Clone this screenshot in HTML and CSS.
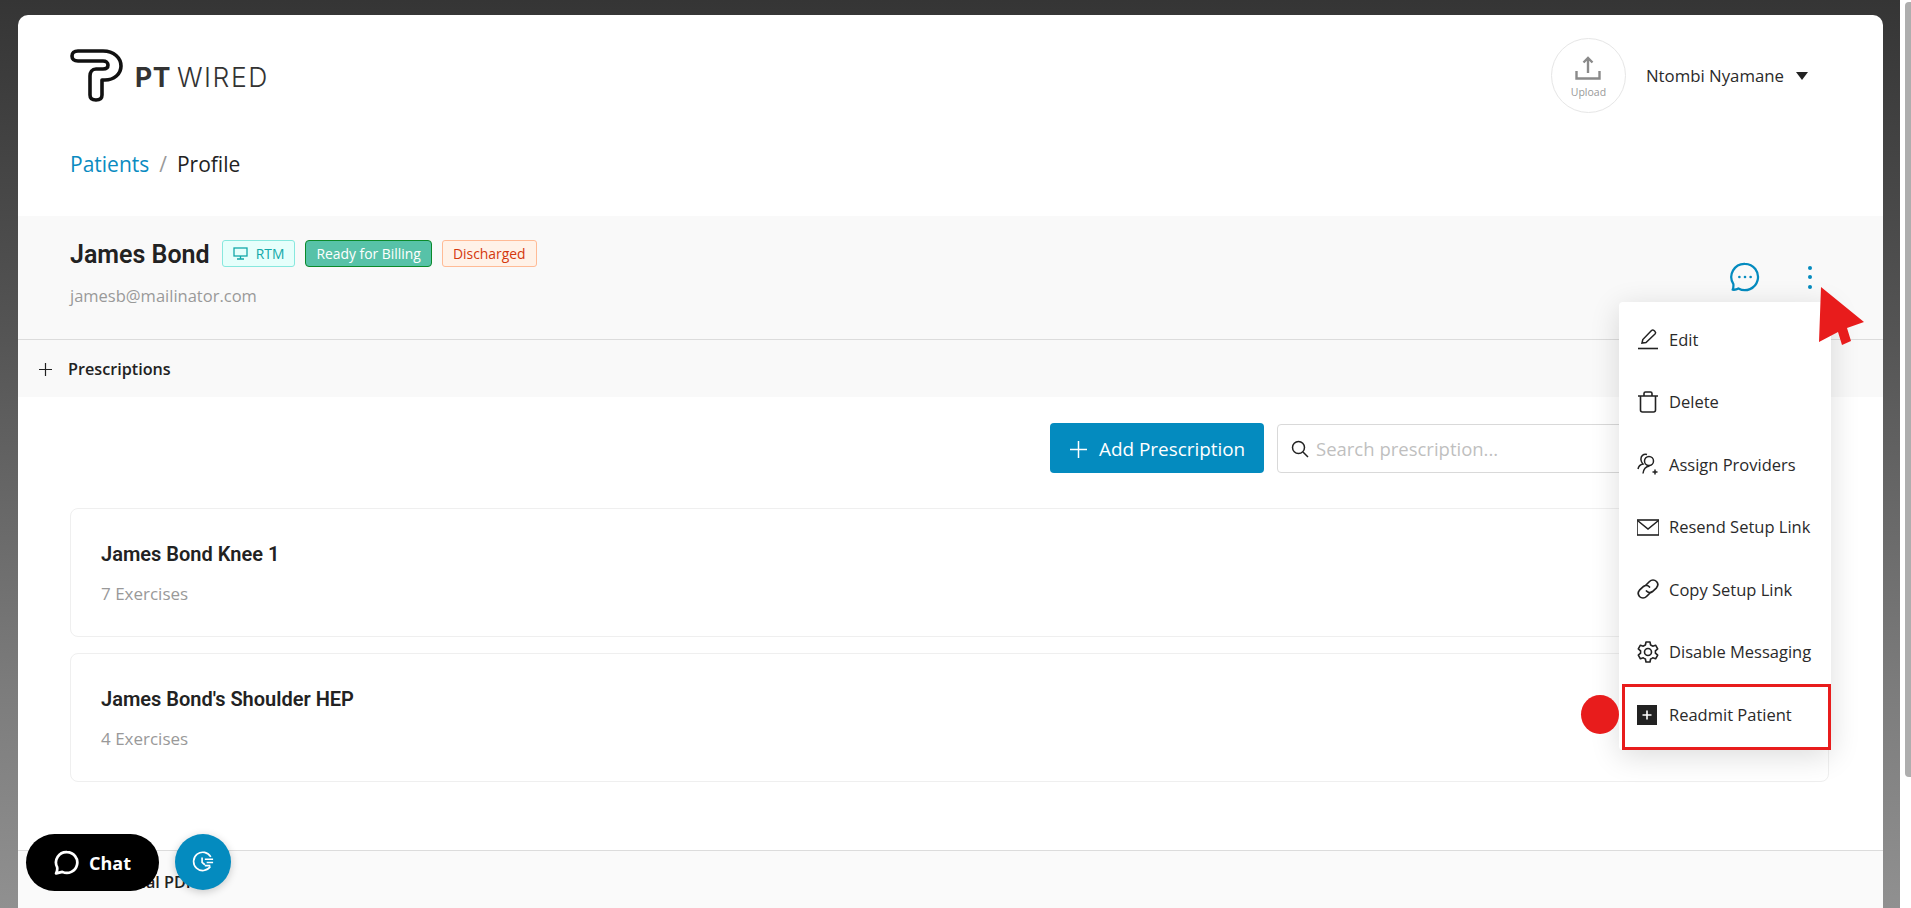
FILE: index.html
```html
<!DOCTYPE html>
<html lang="en">
<head>
<meta charset="utf-8">
<title>PT Wired - Profile</title>
<link rel="stylesheet" href="styles.css">
</head>
<body>
<div class="scrollbar"><div class="thumb"></div></div>
<main class="sheet">
  <header class="topbar">
    <div class="brand">
      <svg class="logo" viewBox="0 0 53 53" fill="none" stroke="#111" stroke-width="3.600" stroke-linejoin="round">
        <path d="M8 2H33C44 2 51 9 51 17C51 25 44 31 35 31H32V46C32 49 30 51 26 51C22 51 20 49 20 46V27C20 23 22 20 26 20H33C36 20 38 18.500 38 16C38 13.500 36 12 33 12H8C4 12 2 10 2 7C2 4 4 2 8 2Z"/>
      </svg>
      <span class="brand-text"><b>PT</b> WIRED</span>
    </div>
    <div class="user">
      <div class="upload">
        <svg class="upload-icon" viewBox="0 0 26 24" fill="none" stroke="#8a8a8a" stroke-width="2.400"><path d="M13 17V2M8.500 6.500L13 2L17.500 6.500M1.500 15V22.500H24.500V15"/></svg>
        <span>Upload</span>
      </div>
      <span class="user-name">Ntombi Nyamane</span>
      <span class="caret"></span>
    </div>
  </header>
  <nav class="crumbs"><a class="crumb-link">Patients</a><span class="crumb-sep">/</span><span class="crumb-now">Profile</span></nav>

  <section class="patient">
    <div class="patient-main">
      <div class="patient-title">
        <h1>James Bond</h1>
        <span class="tag tag-rtm">
          <svg class="tag-icon" viewBox="0 0 15 13" fill="none" stroke="#13a8a8" stroke-width="1.300"><rect x="1" y="1" width="13" height="8"/><path d="M7.500 9V12M4 12H11"/></svg>RTM</span>
        <span class="tag tag-billing">Ready for Billing</span>
        <span class="tag tag-discharged">Discharged</span>
      </div>
      <div class="patient-email">jamesb@mailinator.com</div>
    </div>
    <div class="patient-actions">
      <svg class="act-chat" viewBox="0 0 32 32" fill="none" stroke="#048bbf" stroke-width="2.400"><path d="M16 2A14 14 0 1 1 9 28.200C7 29.500 5 29.800 2.800 29.500C3.800 27.500 3.800 25.800 3.600 23.500A14 14 0 0 1 16 2Z" stroke-linejoin="round"/><circle cx="10" cy="16" r="1.400" fill="#048bbf" stroke="none"/><circle cx="16" cy="16" r="1.400" fill="#048bbf" stroke="none"/><circle cx="22" cy="16" r="1.400" fill="#048bbf" stroke="none"/></svg>
      <div class="kebab"><i></i><i></i><i></i></div>
    </div>
  </section>

  <div class="section-bar">
    <svg class="bar-plus" viewBox="0 0 13 13" stroke="#222" stroke-width="1.200"><path d="M6.500 0V13M0 6.500H13"/></svg>
    <span>Prescriptions</span>
  </div>

  <section class="prescriptions">
    <div class="toolbar">
      <button class="btn-add">
        <svg class="btn-plus" viewBox="0 0 17 17" stroke="#fff" stroke-width="1.500"><path d="M8.500 0V17M0 8.500H17"/></svg>
        Add Prescription</button>
      <div class="search">
        <svg class="search-icon" viewBox="0 0 18 18" fill="none" stroke="#222" stroke-width="1.500"><circle cx="7.500" cy="7.500" r="6"/><path d="M12 12L17 17"/></svg>
        <span>Search prescription...</span>
      </div>
    </div>
    <article class="card"><h2>James Bond Knee 1</h2><p>7 Exercises</p></article>
    <article class="card"><h2>James Bond's Shoulder HEP</h2><p>4 Exercises</p></article>
  </section>

  <div class="section-bar section-bar-last">
    <svg class="bar-plus" viewBox="0 0 13 13" stroke="#222" stroke-width="1.200"><path d="M6.500 0V13M0 6.500H13"/></svg>
    <span>Educational PDFs</span>
  </div>
</main>

<div class="menu">
  <div class="menu-item"><svg class="mi" viewBox="0 0 22 22" fill="none" stroke="#222" stroke-width="1.500"><path d="M5 15L5.800 11.500L14.500 2.500C15.300 1.800 16.200 1.800 17 2.500L18 3.500C18.800 4.300 18.800 5.200 18 6L9 14.500Z"/><path d="M1 20.500H21" stroke-width="1.600"/></svg>Edit</div>
  <div class="menu-item"><svg class="mi" viewBox="0 0 22 22" fill="none" stroke="#222" stroke-width="1.600"><path d="M1 5H21M7 5V2.500C7 1.500 7.500 1 8.500 1H13.500C14.500 1 15 1.500 15 2.500V5M3.500 5V19C3.500 20.200 4.300 21 5.500 21H16.500C17.700 21 18.500 20.200 18.500 19V5"/></svg>Delete</div>
  <div class="menu-item"><svg class="mi" viewBox="0 0 22 22" fill="none" stroke="#222" stroke-width="1.500"><circle cx="12" cy="8" r="4.500"/><path d="M6 20.500C6.500 16 9 13.500 12.500 13M10 1.500C6.500 .5 3.500 3 4 7C4.200 8.500 5 10 6 11C3.500 11.500 1.500 13.500 1 16M18 16.500V21.500M15.500 19H20.500"/></svg>Assign Providers</div>
  <div class="menu-item"><svg class="mi" viewBox="0 0 22 22" fill="none" stroke="#222" stroke-width="1.600"><rect x="0" y="4" width="22" height="15"/><path d="M0.500 4.500L11 13L21.500 4.500"/></svg>Resend Setup Link</div>
  <div class="menu-item"><svg class="mi" viewBox="0 0 22 22" fill="none" stroke="#222" stroke-width="1.700" stroke-linecap="round"><path d="M9 7L12.500 3.500C14.500 1.500 17.500 1.500 19.500 3.500C21.300 5.500 21 8 19.500 9.800L15.500 13.500C13.800 15 11 14.800 9.500 13"/><path d="M13 15L9.500 18.500C7.500 20.500 4.500 20.500 2.500 18.500C0.800 16.500 1 14 2.500 12.200L6.500 8.500C8.200 7 11 7.200 12.500 9"/></svg>Copy Setup Link</div>
  <div class="menu-item"><svg class="mi" viewBox="0 0 22 22" fill="none" stroke="#222" stroke-width="1.600" stroke-linejoin="round"><circle cx="11" cy="11" r="3.500"/><path d="M9 1H13L13.600 4C14.400 4.300 15 4.700 15.700 5.200L18.600 4.200L20.700 7.800L18.400 9.800C18.500 10.700 18.500 11.300 18.400 12.200L20.700 14.200L18.600 17.800L15.700 16.800C15 17.300 14.400 17.700 13.600 18L13 21H9L8.400 18C7.600 17.700 7 17.300 6.300 16.800L3.400 17.800L1.300 14.200L3.600 12.200C3.500 11.300 3.500 10.700 3.600 9.800L1.300 7.800L3.400 4.200L6.300 5.200C7 4.700 7.600 4.300 8.400 4Z"/></svg>Disable Messaging</div>
  <div class="menu-item menu-item-marked"><svg class="mi mi-small" viewBox="0 0 20 20"><rect width="20" height="20" fill="#222"/><path d="M10 5.500V14.500M5.500 10H14.500" stroke="#fff" stroke-width="1.600"/></svg>Readmit Patient</div>
</div>

<svg class="arrow" viewBox="0 0 46 60"><path d="M2 0L45 35L28 41L32 54L23 58L19 45L0 55Z" fill="#e81c1c"/></svg>
<div class="dot"></div>

<button class="chat">
  <svg class="chat-icon" viewBox="0 0 24 24" fill="none" stroke="#fff" stroke-width="2.600" stroke-linejoin="round"><path d="M12.500 1.500A10 10 0 1 1 8 20.500L2 22C3 20 3.400 18 3 16A10 10 0 0 1 12.500 1.500Z"/></svg>
  <span>Chat</span>
</button>
<button class="fab">
  <svg class="fab-icon" viewBox="0 0 24 24" fill="none" stroke="#fff" stroke-width="1.800"><path d="M20.500 6.500A10 10 0 1 0 20 17"/><path d="M11 7V12.500L14 15M14 9H23M16 12.500H23M14 16H20"/></svg>
</button>
```
FILE: styles.css
```css
* { box-sizing: border-box; }
html, body { margin: 0; height: 908px; overflow: hidden; }
body {
  position: relative;
  padding: 15px 28px 0 18px;
  background: linear-gradient(180deg, #353535 0, #555 340px, #7d7d7d 700px, #909090 908px);
  font-family: "Open Sans", "Noto Sans", sans-serif;
  color: #222;
}
.scrollbar { position: absolute; top: 0; right: 0; bottom: 0; width: 11px; background: #fff; padding: 2px 0 0 5px; }
.thumb { height: 775px; width: 6px; background: #aeaeae; border-radius: 4px 0 0 4px; }
.sheet { background: #fff; border-radius: 10px 10px 0 0; height: 893px; overflow: hidden; }

.topbar { display: flex; justify-content: space-between; align-items: center; height: 97px; padding: 24px 75px 0 52px; }
.brand { display: flex; align-items: center; }
.logo { width: 53px; height: 53px; margin-right: 12px; }
.brand-text { font: 300 26.500px Inter, sans-serif; color: #333; margin-top: 2px; letter-spacing: 1.500px; word-spacing: -3px; }
.brand-text b { font-weight: 700; letter-spacing: .6px; }
.user { display: flex; align-items: center; }
.upload { width: 75px; height: 75px; border: 1px solid #e6e6e6; border-radius: 50%; display: flex; flex-direction: column; align-items: center; padding-top: 17px; color: #999; font-size: 10.500px; line-height: 14px; }
.upload-icon { width: 26px; height: 24px; margin-bottom: 5px; }
.user-name { margin-left: 20px; font-size: 16.800px; color: #2a2a2a; }
.caret { margin-left: 12px; border: 6px solid transparent; border-top: 8px solid #222; border-bottom: 0; }

.crumbs { height: 104px; padding: 37px 52px 0; font-size: 21px; line-height: 30px; }
.crumb-link { color: #0a8bc1; }
.crumb-sep { color: #999; margin: 0 10px; }
.crumb-now { color: #222; }

.patient { display: flex; justify-content: space-between; height: 124px; background: #f9f9f9; border-bottom: 1px solid #dcdcdc; padding: 24px 71px 0 52px; }
.patient-title { display: flex; align-items: center; height: 27px; }
h1 { font: 600 25px/27px Roboto, sans-serif; margin: 2px 12px 0 0; color: #222; }
.tag { height: 27px; display: inline-flex; align-items: center; padding: 0 10px; margin-right: 10px; border: 1px solid; border-radius: 3px; font-size: 13.900px; }
.tag-rtm { color: #13a8a8; background: #e6fffb; border-color: #87e8de; }
.tag-icon { width: 15px; height: 13px; margin-right: 8px; }
.tag-billing { color: #fff; background: #57c2a8; border-color: #0b8a2a; border-radius: 4px; }
.tag-discharged { color: #d4380d; background: #fff2e8; border-color: #ffbb96; }
.patient-email { margin-top: 17px; color: #999; font-size: 16.500px; line-height: 24px; }
.patient-actions { display: flex; align-items: center; height: 30px; margin-top: 22px; }
.act-chat { width: 30px; height: 30px; }
.kebab { margin-left: 48px; width: 4px; display: flex; flex-direction: column; gap: 5.500px; }
.kebab i { width: 4px; height: 4px; background: #048bbf; border-radius: 50%; }

.section-bar { height: 57px; display: flex; align-items: center; background: #f9f9f9; padding: 1px 0 0 21px; font-size: 16.200px; font-weight: 600; }
.section-bar-last { height: 60px; background: #fafafa; }
.bar-plus { width: 13px; height: 13px; margin-right: 16px; }

.prescriptions { padding: 26px 54px 0 52px; height: 454px; border-bottom: 1px solid #dcdcdc; }
.toolbar { display: flex; padding-left: 980px; align-items: center; height: 50px; margin-bottom: 35px; }
.btn-add { width: 214px; height: 50px; background: #048bbf; color: #fff; border: 0; border-radius: 4px; font: 400 18.900px "Open Sans", sans-serif; display: flex; align-items: center; padding: 2px 0 0 20px; flex: none; }
.btn-plus { width: 17px; height: 17px; margin-right: 12px; }
.search { margin-left: 13px; flex: 1; height: 49px; border: 1px solid #d9d9d9; border-radius: 4px; display: flex; align-items: center; padding: 1px 0 0 13px; font-size: 18.500px; color: #bfbfbf; }
.search-icon { width: 18px; height: 18px; margin-right: 7px; }

.card { height: 129px; border: 1px solid #efefef; border-radius: 8px; padding: 32px 30px 0; margin-bottom: 16px; }
.card h2 { margin: 0; font: 600 20px/26px Roboto, sans-serif; color: #222; }
.card p { margin: 15px 0 0; font-size: 17px; line-height: 24px; color: #999; }

.menu { position: absolute; left: 1619px; top: 302px; width: 212px; height: 448px; background: #fff; border-radius: 4px; box-shadow: 0 6px 30px rgba(0,0,0,.14); padding: 6px 0 0 3px; }
.menu-item { height: 62.500px; display: flex; align-items: center; padding-left: 15px; font-size: 16.500px; color: #2a2a2a; }
.mi { width: 22px; height: 22px; margin-right: 10px; flex: none; }
.mi-small { width: 20px; height: 20px; margin-right: 12px; }
.menu-item-marked { margin-top: 1px; border: 3px solid #e81c1c; height: 66px; padding: 0 0 5px 12px; }

.arrow { position: absolute; left: 1819px; top: 287px; width: 46px; height: 60px; }
.dot { position: absolute; left: 1581px; top: 695px; width: 38px; height: 39px; border-radius: 50%; background: #e81c1c; }

.chat { position: absolute; left: 26px; top: 834px; width: 133px; height: 57px; border: 0; border-radius: 29px; background: #000; color: #fff; display: flex; align-items: center; justify-content: center; font: 700 18px "Open Sans", sans-serif; padding: 0; }
.chat-icon { width: 25px; height: 26px; margin-right: 10px; }
.fab { position: absolute; left: 175px; top: 834px; width: 56px; height: 56px; border: 0; border-radius: 50%; background: #048bbf; box-shadow: 0 2px 8px rgba(0,0,0,.2); display: flex; align-items: center; justify-content: center; padding: 0; }
.fab-icon { width: 22px; height: 22px; }
```
